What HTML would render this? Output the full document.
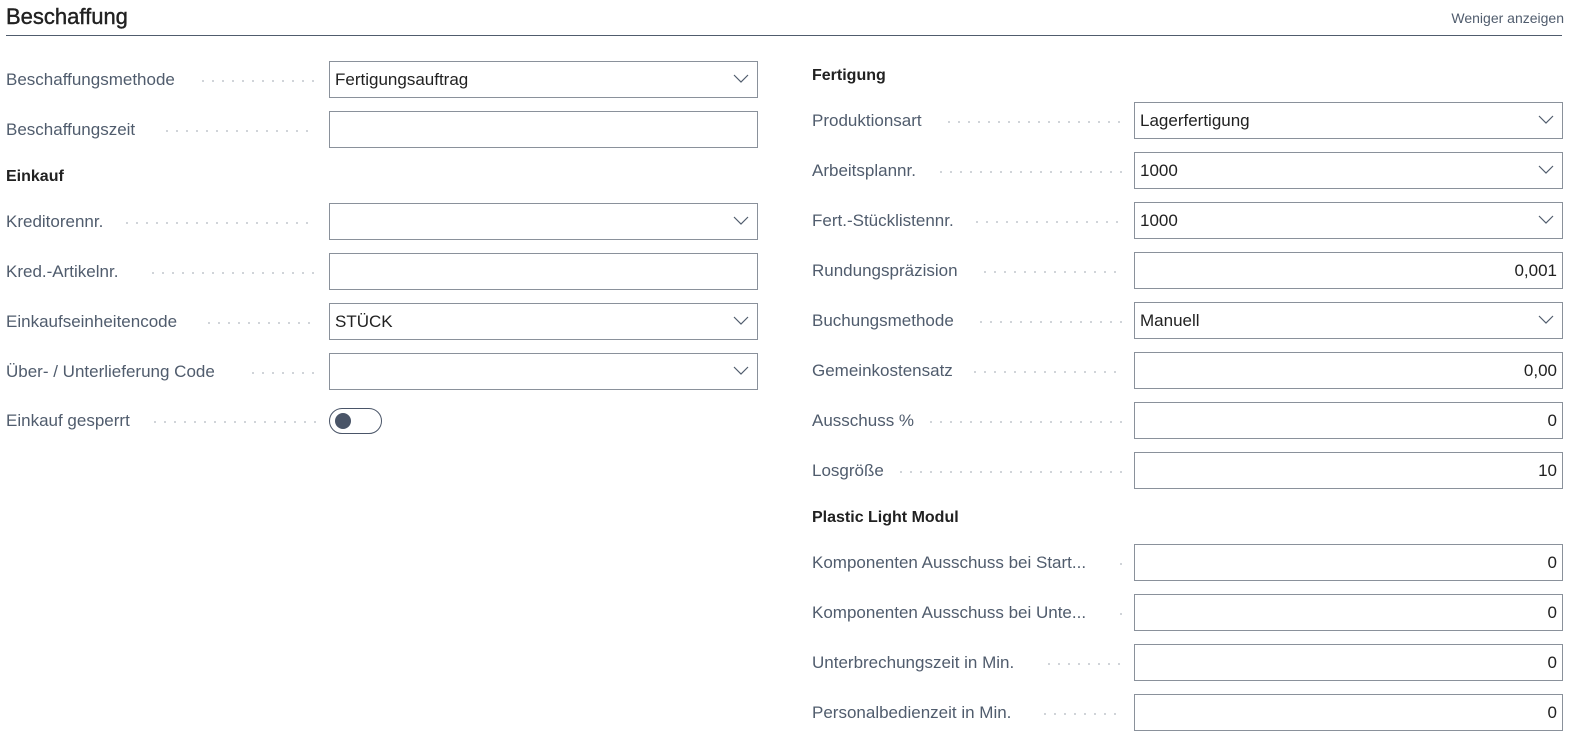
<!DOCTYPE html>
<html><head><meta charset="utf-8"><style>
body{margin:0;width:1591px;height:744px;background:#fff;font-family:"Liberation Sans",sans-serif;position:relative;overflow:hidden}
.a{position:absolute}
.t{left:6px;top:4px;font-size:22px;color:#212121;-webkit-text-stroke:0.4px #212121}
.wa{right:27px;top:10px;font-size:14px;color:#505c6d}
.hr{left:6px;top:35px;width:1556px;height:1px;background:#505c6d}
.lab{font-size:17px;color:#505c6d;white-space:nowrap;height:20px;line-height:20px}
.dots{height:2px;background:radial-gradient(circle,#c4c9cf 0.9px,transparent 1.1px) 0 0/10px 2px repeat-x}
.box{border:1px solid #8a919b;height:35px;box-sizing:content-box;background:#fff;font-size:17px;color:#212121;line-height:35px;padding:0 5px}
.r{text-align:right}
.h{font-size:16px;font-weight:bold;color:#212121}
.chev{position:absolute;right:8px;top:12px}
</style></head><body>
<div class="a t">Beschaffung</div>
<div class="a wa">Weniger anzeigen</div>
<div class="a hr"></div>

<div class="a lab" style="left:6px;top:70px">Beschaffungsmethode</div><div class="a dots" style="left:198px;width:118px;top:80px"></div>
<div class="a box" style="left:329px;top:61px;width:417px">Fertigungsauftrag<svg class="chev" width="16" height="10"><path d="M1 1l7 7 7-7" fill="none" stroke="#505c6d" stroke-width="1.2"/></svg></div>
<div class="a lab" style="left:6px;top:120px">Beschaffungszeit</div><div class="a dots" style="left:162px;width:154px;top:130px"></div>
<div class="a box" style="left:329px;top:111px;width:417px"></div>
<div class="a h" style="left:6px;top:168px">Einkauf</div>
<div class="a lab" style="left:6px;top:212px">Kreditorennr.</div><div class="a dots" style="left:122px;width:194px;top:222px"></div>
<div class="a box" style="left:329px;top:203px;width:417px"><svg class="chev" width="16" height="10"><path d="M1 1l7 7 7-7" fill="none" stroke="#505c6d" stroke-width="1.2"/></svg></div>
<div class="a lab" style="left:6px;top:262px">Kred.-Artikelnr.</div><div class="a dots" style="left:148px;width:168px;top:272px"></div>
<div class="a box" style="left:329px;top:253px;width:417px"></div>
<div class="a lab" style="left:6px;top:312px">Einkaufseinheitencode</div><div class="a dots" style="left:204px;width:112px;top:322px"></div>
<div class="a box" style="left:329px;top:303px;width:417px">STÜCK<svg class="chev" width="16" height="10"><path d="M1 1l7 7 7-7" fill="none" stroke="#505c6d" stroke-width="1.2"/></svg></div>
<div class="a lab" style="left:6px;top:362px">Über- / Unterlieferung Code</div><div class="a dots" style="left:248px;width:68px;top:372px"></div>
<div class="a box" style="left:329px;top:353px;width:417px"><svg class="chev" width="16" height="10"><path d="M1 1l7 7 7-7" fill="none" stroke="#505c6d" stroke-width="1.2"/></svg></div>
<div class="a lab" style="left:6px;top:411px">Einkauf gesperrt</div><div class="a dots" style="left:150px;width:166px;top:421px"></div>
<div class="a" style="left:329px;top:408px;width:51px;height:24px;border:1.5px solid #4a5568;border-radius:14px"><div class="a" style="left:5px;top:4px;width:16px;height:16px;border-radius:50%;background:#4a5568"></div></div>

<div class="a h" style="left:812px;top:67px">Fertigung</div>
<div class="a lab" style="left:812px;top:111px">Produktionsart</div><div class="a dots" style="left:944px;width:178px;top:121px"></div>
<div class="a box" style="left:1134px;top:102px;width:417px">Lagerfertigung<svg class="chev" width="16" height="10"><path d="M1 1l7 7 7-7" fill="none" stroke="#505c6d" stroke-width="1.2"/></svg></div>
<div class="a lab" style="left:812px;top:161px">Arbeitsplannr.</div><div class="a dots" style="left:936px;width:186px;top:171px"></div>
<div class="a box" style="left:1134px;top:152px;width:417px">1000<svg class="chev" width="16" height="10"><path d="M1 1l7 7 7-7" fill="none" stroke="#505c6d" stroke-width="1.2"/></svg></div>
<div class="a lab" style="left:812px;top:211px">Fert.-Stücklistennr.</div><div class="a dots" style="left:972px;width:150px;top:221px"></div>
<div class="a box" style="left:1134px;top:202px;width:417px">1000<svg class="chev" width="16" height="10"><path d="M1 1l7 7 7-7" fill="none" stroke="#505c6d" stroke-width="1.2"/></svg></div>
<div class="a lab" style="left:812px;top:261px">Rundungspräzision</div><div class="a dots" style="left:980px;width:142px;top:271px"></div>
<div class="a box r" style="left:1134px;top:252px;width:417px">0,001</div>
<div class="a lab" style="left:812px;top:311px">Buchungsmethode</div><div class="a dots" style="left:976px;width:146px;top:321px"></div>
<div class="a box" style="left:1134px;top:302px;width:417px">Manuell<svg class="chev" width="16" height="10"><path d="M1 1l7 7 7-7" fill="none" stroke="#505c6d" stroke-width="1.2"/></svg></div>
<div class="a lab" style="left:812px;top:361px">Gemeinkostensatz</div><div class="a dots" style="left:970px;width:152px;top:371px"></div>
<div class="a box r" style="left:1134px;top:352px;width:417px">0,00</div>
<div class="a lab" style="left:812px;top:411px">Ausschuss %</div><div class="a dots" style="left:926px;width:196px;top:421px"></div>
<div class="a box r" style="left:1134px;top:402px;width:417px">0</div>
<div class="a lab" style="left:812px;top:461px">Losgröße</div><div class="a dots" style="left:896px;width:226px;top:471px"></div>
<div class="a box r" style="left:1134px;top:452px;width:417px">10</div>
<div class="a h" style="left:812px;top:509px">Plastic Light Modul</div>
<div class="a lab" style="left:812px;top:553px">Komponenten Ausschuss bei Start...</div><div class="a dots" style="left:1116px;width:6px;top:563px"></div>
<div class="a box r" style="left:1134px;top:544px;width:417px">0</div>
<div class="a lab" style="left:812px;top:603px">Komponenten Ausschuss bei Unte...</div><div class="a dots" style="left:1116px;width:6px;top:613px"></div>
<div class="a box r" style="left:1134px;top:594px;width:417px">0</div>
<div class="a lab" style="left:812px;top:653px">Unterbrechungszeit in Min.</div><div class="a dots" style="left:1044px;width:78px;top:663px"></div>
<div class="a box r" style="left:1134px;top:644px;width:417px">0</div>
<div class="a lab" style="left:812px;top:703px">Personalbedienzeit in Min.</div><div class="a dots" style="left:1040px;width:82px;top:713px"></div>
<div class="a box r" style="left:1134px;top:694px;width:417px">0</div>
</body></html>
